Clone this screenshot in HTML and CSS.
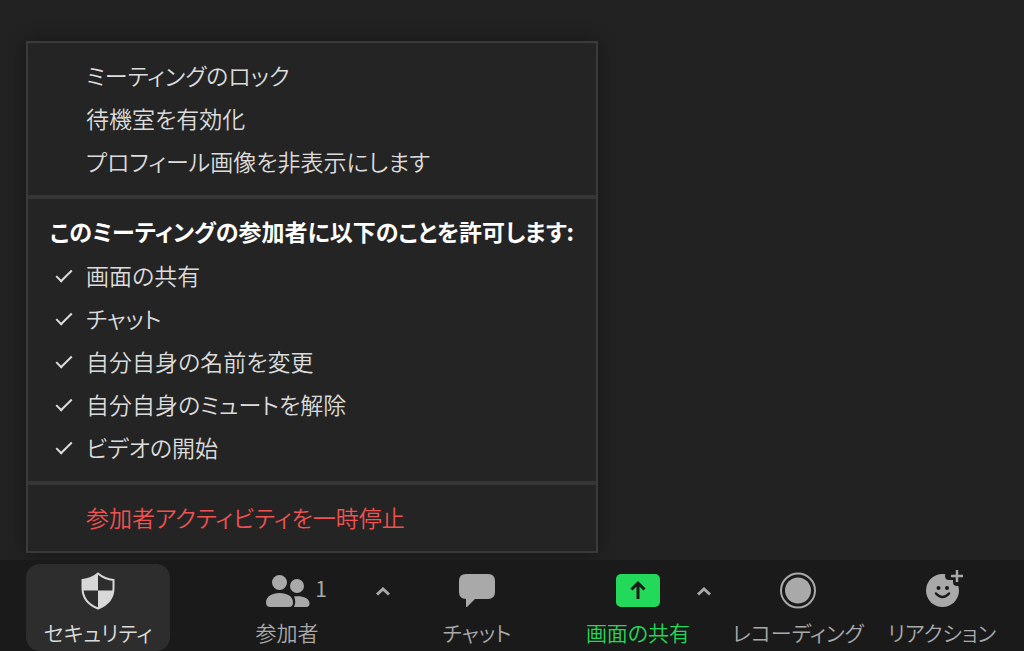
FILE: index.html
```html
<!DOCTYPE html>
<html lang="ja">
    <head>
        <meta charset="utf-8">
        <title>ミーティング</title>
        <link rel="stylesheet" href="styles.css">
    </head>
    <body>
        <main>
            <div class="menu">
                <div class="section">
                    <button class="row">ミーティングのロック</button>
                    <button class="row">待機室を有効化</button>
                    <button class="row">プロフィール画像を非表示にします</button>
                </div>
                <div class="section">
                    <h2>このミーティングの参加者に以下のことを許可します:</h2>
                    <label class="row"><input type="checkbox" checked>画面の共有</label>
                    <label class="row"><input type="checkbox" checked>チャット</label>
                    <label class="row"><input type="checkbox" checked>自分自身の名前を変更</label>
                    <label class="row"><input type="checkbox" checked>自分自身のミュートを解除</label>
                    <label class="row"><input type="checkbox" checked>ビデオの開始</label>
                </div>
                <div class="section">
                    <button class="row stop">参加者アクティビティを一時停止</button>
                </div>
            </div>
        </main>
        <nav class="toolbar">
            <button class="tool active">
                <svg width="34" height="38" viewBox="0 0 34 38">
                    <path d="M17 1.5C21 5 26 7.500 32.500 8V16C32.500 26 26 33 17 36.500C8 33 1.500 26 1.500 16V8C8 7.500 13 5 17 1.500Z" fill="#2d2d2d" stroke="#d8d8d8" stroke-width="2"/>
                    <path d="M17 1.500V18.500H1.500V8C8 7.500 13 5 17 1.500ZM17 18.500H32.300C31.500 27 25.500 33.500 17 36.500Z" fill="#d8d8d8"/>
                </svg>
                <span>セキュリティ</span>
            </button>
            <div class="group">
                <button class="tool people">
                    <svg width="44" height="38" viewBox="0 0 44 38">
                        <circle cx="14.500" cy="10.500" r="7.500"/>
                        <circle cx="32" cy="14" r="7"/>
                        <path d="M1 30.500C1 24.500 7 21 14.500 21S28 24.500 28 30.500Q28 35 23.500 35H5.500Q1 35 1 30.500Z"/>
                        <path d="M29 24.500C37 23.500 44.500 26 44.500 31.500Q44.500 35 41 35H29Q31.500 30 29 24.500Z"/>
                    </svg>
                    <b class="count">1</b>
                    <span>参加者</span>
                </button>
                <button class="caret" aria-label="参加者オプション"><svg width="14" height="9" viewBox="0 0 14 9"><path d="M1 7.500L7 2L13 7.500"/></svg></button>
            </div>
            <button class="tool">
                <svg width="38" height="38" viewBox="0 0 38 38">
                    <path d="M8 2H30Q37 2 37 9V20Q37 27 30 27H17L9 35H8V27Q1 27 1 20V9Q1 2 8 2Z"/>
                </svg>
                <span>チャット</span>
            </button>
            <div class="group share">
                <button class="tool">
                    <svg width="44" height="38" viewBox="0 0 44 38">
                        <rect y="2" width="44" height="33" rx="5"/>
                        <path d="M22 27V12M15.500 17.500L22 11L28.500 17.500" fill="none" stroke="#1a1a1a" stroke-width="3"/>
                    </svg>
                    <span>画面の共有</span>
                </button>
                <button class="caret" aria-label="共有オプション"><svg width="14" height="9" viewBox="0 0 14 9"><path d="M1 7.500L7 2L13 7.500"/></svg></button>
            </div>
            <button class="tool">
                <svg width="38" height="38" viewBox="0 0 38 38">
                    <circle cx="19" cy="18.500" r="17" fill="none" stroke="#a9a9a9" stroke-width="2"/>
                    <circle cx="19" cy="18.500" r="13"/>
                </svg>
                <span>レコーディング</span>
            </button>
            <button class="tool">
                <svg width="42" height="38" viewBox="0 0 42 38">
                    <circle cx="21.500" cy="18.500" r="16.500"/>
                    <path d="M36 -2V10M28 4H44" fill="none" stroke="#1a1a1a" stroke-width="8" stroke-linecap="round"/>
                    <path d="M36 -2V10M30 4H42" fill="none" stroke="#a9a9a9" stroke-width="2.500"/>
                    <circle cx="17.500" cy="16" r="2" fill="#1a1a1a"/>
                    <circle cx="26" cy="16" r="2" fill="#1a1a1a"/>
                    <path d="M15 21.500Q21.500 28.500 28 21.500" fill="none" stroke="#1a1a1a" stroke-width="2.500" stroke-linecap="round"/>
                </svg>
                <span>リアクション</span>
            </button>
        </nav>
    </body>
</html>
```

FILE: styles.css
```css
* {
    box-sizing: border-box;
}
body {
    display: flex;
    flex-direction: column;
    min-height: 100vh;
    margin: 0;
    background-color: #222222;
    color: #dcdcdc;
    font-family: "Noto Sans CJK JP", "Noto Sans", sans-serif;
    font-feature-settings: "palt";
    font-weight: 350;
}
button {
    padding: 0;
    border: 0;
    background: none;
    color: inherit;
    font: inherit;
    font-feature-settings: inherit;
    white-space: nowrap;
}
main {
    display: flex;
    flex: 1;
    align-items: flex-end;
    padding: 40px 26px 7px;
}
.menu {
    width: 572px;
    max-width: 100%;
    border: 2px solid #3a3a3a;
    background-color: #242424;
    box-shadow: 0 0 16px rgba(0, 0, 0, 0.4);
    font-size: 23px;
}
.section {
    padding: 10px 0 13px;
}
.section + .section {
    border-top: 4px solid #363636;
}
.row {
    display: flex;
    align-items: center;
    width: 100%;
    height: 43px;
    padding-left: 58px;
}
label.row {
    padding-left: 26px;
}
h2 {
    height: 44px;
    margin: 0;
    padding-left: 22px;
    color: #ffffff;
    font-size: 23px;
    line-height: 44px;
    white-space: nowrap;
}
input {
    appearance: none;
    width: 18px;
    height: 18px;
    margin: 0 14px 0 0;
}
input:checked::before {
    content: "";
    display: block;
    width: 6px;
    height: 14px;
    margin-left: 6px;
    border: solid #dcdcdc;
    border-width: 0 2px 2px 0;
    transform: rotate(45deg);
}
.stop {
    color: #f05252;
}
.toolbar {
    display: grid;
    grid-template-columns: 144fr 236fr 142fr 168fr 164fr 124fr;
    padding: 4px 20px 0 26px;
    background-color: #1a1a1a;
    color: #a9a9a9;
    font-size: 21px;
}
.tool {
    display: flex;
    flex-direction: column;
    align-items: center;
    gap: 6px;
    height: 87px;
    padding-top: 8px;
    line-height: 32px;
}
.tool svg {
    fill: #a9a9a9;
    overflow: visible;
}
.active {
    border-radius: 14px;
    background-color: #2d2d2d;
    color: #dcdcdc;
}
.group {
    display: flex;
    justify-content: flex-end;
}
.people {
    position: relative;
    width: 146px;
}
.count {
    position: absolute;
    top: 8px;
    right: 33px;
    font-weight: 400;
}
.caret {
    width: 46px;
    height: 54px;
}
.caret svg {
    display: block;
    margin: 0 auto;
    fill: none;
    stroke: #a9a9a9;
    stroke-width: 3;
}
.share .tool {
    width: 108px;
    color: #23d959;
}
.share .tool svg {
    fill: #23d959;
}
.share .caret {
    width: 24px;
}
```
